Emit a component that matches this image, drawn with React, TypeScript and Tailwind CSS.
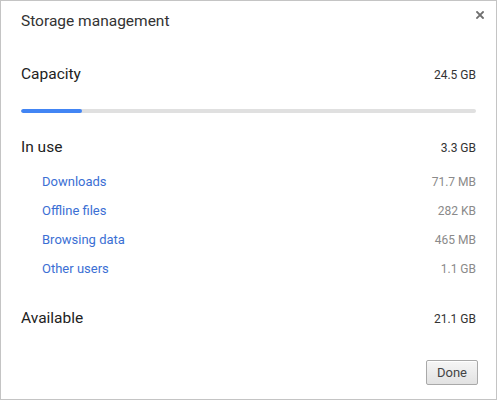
import React from 'react';

interface UsageItem {
  label: string;
  size: string;
}

const usage: UsageItem[] = [
  { label: 'Downloads', size: '71.7 MB' },
  { label: 'Offline files', size: '282 KB' },
  { label: 'Browsing data', size: '465 MB' },
  { label: 'Other users', size: '1.1 GB' },
];

// Share of capacity already used, drawn as the blue part of the bar
const usedPercent = 13.4;

const SectionRow: React.FC<{ label: string; value: string; className?: string }> = ({ label, value, className = '' }) => (
  <div className={`flex h-[20px] items-center justify-between ${className}`}>
    <span className="text-[15.5px] text-[#222]">{label}</span>
    <span className="text-[12px] text-[#333]">{value}</span>
  </div>
);

export default function App() {
  return (
    <div
      className="relative flex h-[400px] w-[497px] flex-col border border-[#c4c4c4] bg-white px-[20px]"
      style={{ fontFamily: 'Roboto, "Noto Sans", sans-serif' }}
    >
      {/* Close button */}
      <button className="absolute right-[11px] top-[9px] flex h-[10px] w-[10px] items-center justify-center" aria-label="Close">
        <svg width="8" height="8" viewBox="0 0 8 8">
          <path d="M1 1 L7 7 M7 1 L1 7" stroke="#6f6f6f" strokeWidth="1.8" strokeLinecap="square" />
        </svg>
      </button>

      <div className="mt-[11px] flex h-[20px] items-center text-[15.5px] text-[#333]">Storage management</div>

      <SectionRow label="Capacity" value="24.5 GB" className="mt-[33px]" />

      <div className="mt-[24px] h-[4px] w-full overflow-hidden rounded-full bg-[#e0e0e0]">
        <div className="h-full rounded-full bg-[#4285f4]" style={{ width: `${usedPercent}%` }} />
      </div>

      <SectionRow label="In use" value="3.3 GB" className="mt-[25px]" />

      <div className="mt-[9px] flex flex-col pl-[21px]">
        {usage.map((item) => (
          <div key={item.label} className="flex h-[29px] items-center justify-between">
            <a className="cursor-pointer text-[13px] text-[#3b6fd4]">{item.label}</a>
            <span className="text-[12px] text-[#8a8a8a]">{item.size}</span>
          </div>
        ))}
      </div>

      <SectionRow label="Available" value="21.1 GB" className="mt-[26px]" />

      <div className="mt-[31px] flex justify-end">
        <button className="-mr-[2px] h-[25px] w-[52px] rounded-[2px] border border-[#a9a9a9] bg-gradient-to-b from-[#f6f6f6] to-[#e2e2e2] text-[13px] text-[#444] shadow-[inset_0_1px_0_#fff]">
          Done
        </button>
      </div>
    </div>
  );
}
